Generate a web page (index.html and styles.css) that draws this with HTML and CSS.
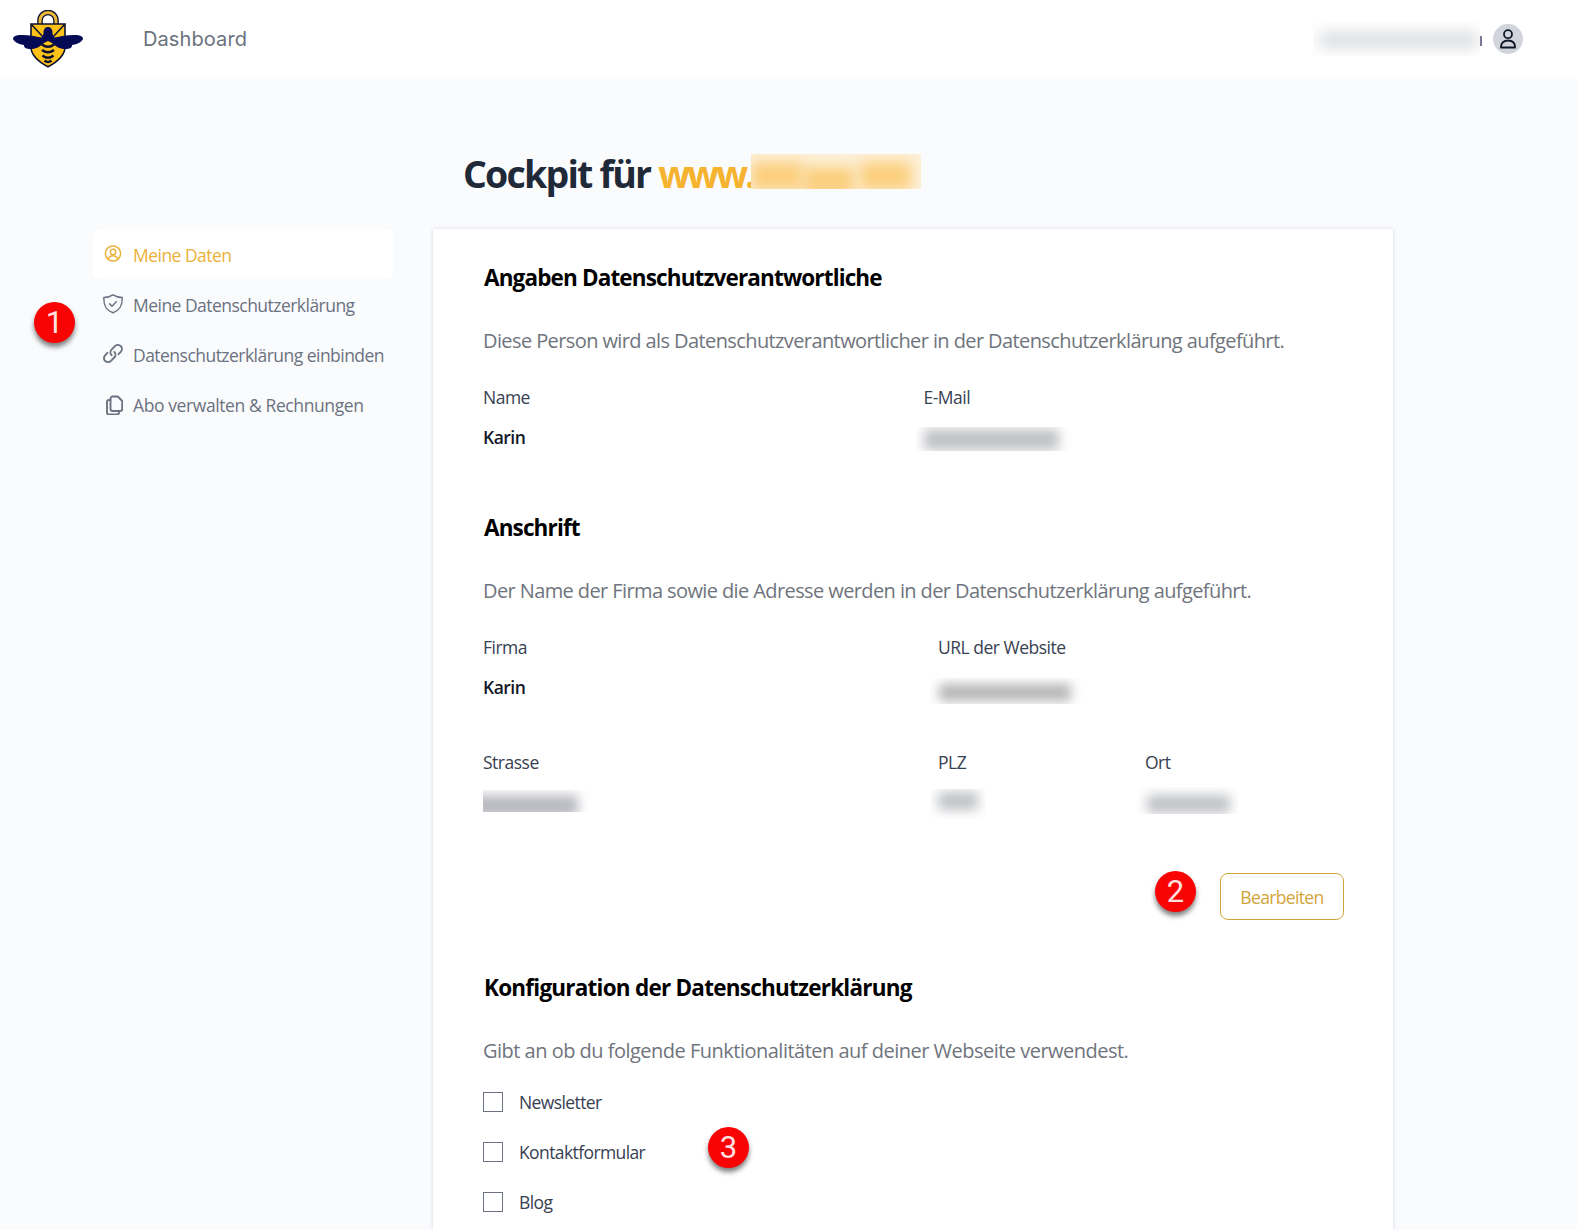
FILE: index.html
```html
<!DOCTYPE html>
<html lang="de">

<head>
    <title>Cockpit</title>
    <meta charset="utf-8" />
    <link rel="stylesheet" href="styles.css">
</head>

<body>

    <header class="topbar">
        <svg class="logo" viewBox="0 0 70 58" width="70" height="58">
            <path d="M27 15v-4.500a8 8 0 0 1 16 0V15" fill="none" stroke="#0b1030" stroke-width="5.600" />
            <path d="M27 15v-4.500a8 8 0 0 1 16 0V15" fill="none" stroke="#e9b93a" stroke-width="3" />
            <path d="M18 14h34v23c0 9-8 15-17 19.800C26 52 18 46 18 37z" fill="#fdc118" stroke="#0b1030" stroke-width="1.600" />
            <path d="M18.500 14.500L30 27M51.500 14.500L40 27" stroke="#0b1030" stroke-width="1.500" />
            <path d="M35 17c-3 0-4.500 2.500-4.500 5.500 0 2-.5 3.500-2 5C22 26 14 24.500 6 25c-5 .5-7.500 3-5 5.500 2 2.500 6 4.200 10 4.500-.5 3 3.500 4.500 8 4 5.500-.5 8.500-3 12-6l4-2 4 2c3.500 3 6.500 5.500 12 6 4.500.5 8.500-1 8-4 4-.3 8-2 10-4.500 2.500-2.500 0-5-5-5.500-8-.5-16 1-22.500 2.500-1.500-1.500-2-3-2-5 0-3-1.500-5.500-4.500-5.500z" fill="#050a55" />
            <path d="M29 34.500q6 4.500 12 0M29 40q6 4.500 12 0M29.500 45.500q5.500 4.500 11 0M31.500 50.500q3.500 3 7 0" fill="none" stroke="#0b1030" stroke-width="2.400" />
        </svg>
        <a class="topbar-link" href="#">Dashboard</a>
        <div class="account">
            <span class="redacted redacted-account"><i></i></span>
            <span class="account-edge"></span>
            <span class="avatar">
                <svg viewBox="0 0 24 24" width="24" height="24">
                    <circle cx="12" cy="7.200" r="4" />
                    <path d="M4.900 20.500c0-4.700 3-7 7.100-7s7.100 2.300 7.100 7z" />
                </svg>
            </span>
        </div>
    </header>

    <h1>Cockpit für <span class="domain">www.</span><span class="redacted redacted-domain"><i></i><i></i><i></i></span></h1>

    <div class="layout">
        <nav class="sidebar">
            <a class="nav-item active" href="#">
                <svg viewBox="0 0 20 20" width="20" height="20">
                    <circle cx="10" cy="9.500" r="7.600" />
                    <circle cx="10" cy="8" r="2.700" />
                    <path d="M5.200 15c.7-2.300 2.500-3.300 4.800-3.300s4.100 1 4.800 3.300" />
                </svg>
                <span>Meine Daten</span>
            </a>
            <a class="nav-item" href="#">
                <svg viewBox="0 0 20 20" width="20" height="20">
                    <path d="M10 .8c2.600 1.700 5.500 2.600 9.200 2.700C19.400 11 17.600 16 10 18.700 2.400 16 .6 11 .8 3.500 4.500 3.400 7.400 2.500 10 .8z" />
                    <path d="M6.700 9.900l2.300 2.300 4.300-4.500" />
                </svg>
                <span>Meine Datenschutzerklärung</span>
            </a>
            <a class="nav-item" href="#">
                <svg class="bold" viewBox="0 0 20 20" width="20" height="20">
                    <path d="M8.600 11.200a4 4 0 0 1 0-5.600l3.300-3.400a4 4 0 0 1 5.900 5.600l-2.300 2.400" />
                    <path d="M11.300 7.900a4 4 0 0 1 0 5.600L8 16.900a4 4 0 0 1-5.900-5.600l2.300-2.400" />
                </svg>
                <span>Datenschutzerklärung einbinden</span>
            </a>
            <a class="nav-item last" href="#">
                <svg class="bold" viewBox="0 0 20 20" width="20" height="20">
                    <path d="M9.500 1.500h5.300L19.200 6v8a2 2 0 0 1-2 2H9.500a2 2 0 0 1-2-2V3.500a2 2 0 0 1 2-2z" />
                    <path d="M7.500 5H6a2 2 0 0 0-2 2v10.500a2 2 0 0 0 2 2h8a2 2 0 0 0 2-2V16" />
                </svg>
                <span>Abo verwalten &amp; Rechnungen</span>
            </a>
        </nav>

        <main class="card">
            <section>
                <h2>Angaben Datenschutzverantwortliche</h2>
                <p class="intro">Diese Person wird als Datenschutzverantwortlicher in der Datenschutzerklärung aufgeführt.</p>
                <div class="fields two">
                    <div class="field">
                        <label>Name</label>
                        <strong>Karin</strong>
                    </div>
                    <div class="field">
                        <label>E-Mail</label>
                        <span class="redacted redacted-mail"><i></i></span>
                    </div>
                </div>
            </section>

            <section>
                <h2>Anschrift</h2>
                <p class="intro">Der Name der Firma sowie die Adresse werden in der Datenschutzerklärung aufgeführt.</p>
                <div class="fields three">
                    <div class="field">
                        <label>Firma</label>
                        <strong>Karin</strong>
                    </div>
                    <div class="field wide">
                        <label>URL der Website</label>
                        <span class="redacted redacted-url"><i></i></span>
                    </div>
                    <div class="field">
                        <label>Strasse</label>
                        <span class="redacted redacted-street"><i></i></span>
                    </div>
                    <div class="field">
                        <label>PLZ</label>
                        <span class="redacted redacted-plz"><i></i></span>
                    </div>
                    <div class="field">
                        <label>Ort</label>
                        <span class="redacted redacted-ort"><i></i></span>
                    </div>
                </div>
                <div class="actions">
                    <button class="btn" type="button">Bearbeiten</button>
                </div>
            </section>

            <section>
                <h2 class="loose">Konfiguration der Datenschutzerklärung</h2>
                <p class="intro loose">Gibt an ob du folgende Funktionalitäten auf deiner Webseite verwendest.</p>
                <div class="options">
                    <label class="option"><input type="checkbox" /><span>Newsletter</span></label>
                    <label class="option"><input type="checkbox" /><span>Kontaktformular</span></label>
                    <label class="option"><input type="checkbox" /><span>Blog</span></label>
                </div>
            </section>
        </main>
    </div>

    <!-- Markierungen -->
    <span class="marker marker-1">1</span>
    <span class="marker marker-2">2</span>
    <span class="marker marker-3">3</span>

</body>

</html>
```
FILE: styles.css
```css
* {
    box-sizing: border-box;
}

body {
    margin: 0;
    height: 1230px;
    overflow: hidden;
    position: relative;
    background-color: #fafbfd;
    font-family: "Open Sans", "Noto Sans", sans-serif;
    color: #1f2937;
}

a {
    text-decoration: none;
}

/* Kopfzeile */

.topbar {
    display: flex;
    align-items: center;
    height: 79px;
    padding: 0 54px 2px 13px;
    background-color: #fff;
}

.topbar-link {
    margin-left: 60px;
    font-family: Inter, sans-serif;
    font-size: 20px;
    letter-spacing: 0.1px;
    color: #6b7280;
}

.account {
    display: flex;
    align-items: center;
    margin-left: auto;
}

.account-edge {
    width: 2px;
    height: 10px;
    margin: 4px 11px 0 0;
    background-color: #777994;
}

.avatar {
    display: flex;
    align-items: center;
    justify-content: center;
    width: 30px;
    height: 30px;
    border-radius: 50%;
    background-color: #d1d5db;
}

.avatar svg {
    fill: none;
    stroke: #111827;
    stroke-width: 1.800;
    stroke-linejoin: round;
}

/* Titel */

h1 {
    display: flex;
    height: 50px;
    margin: 70px 0 30px 463px;
    font-size: 37.5px;
    line-height: 50px;
    font-weight: 700;
    letter-spacing: -1.800px;
    white-space: pre;
}

.domain {
    width: 93px;
    letter-spacing: -3.200px;
    color: #f5b32f;
}

/* Aufbau */

.layout {
    display: grid;
    grid-template-columns: 300px 960px;
    column-gap: 40px;
    margin-left: 93px;
}

.nav-item {
    display: flex;
    align-items: center;
    gap: 10px;
    height: 50px;
    padding: 0 10px;
    border-radius: 6px;
    font-size: 17.5px;
    letter-spacing: -0.530px;
    white-space: nowrap;
    color: #6b7280;
}

.nav-item.last {
    letter-spacing: -0.400px;
}

.nav-item span {
    padding-top: 2px;
}

.nav-item.active {
    background-color: #fff;
    color: #eab13a;
}

.nav-item svg {
    flex: none;
    fill: none;
    stroke: currentColor;
    stroke-width: 1.500;
    stroke-linecap: round;
    stroke-linejoin: round;
}

.nav-item svg.bold {
    stroke-width: 1.900;
}

.nav-item.last svg {
    margin-top: 2px;
}

.card {
    height: 1001px;
    padding: 31px 49px 0 50px;
    background-color: #fff;
    box-shadow: 0 0 4px rgba(30, 50, 90, 0.16);
}

section + section {
    margin-top: 60px;
}

section:last-child {
    margin-top: 50px;
}

h2 {
    margin: 0 0 31px;
    padding-left: 1px;
    font-size: 22.5px;
    line-height: 35px;
    font-weight: 700;
    letter-spacing: -0.860px;
    color: #000;
}

h2.loose {
    letter-spacing: -0.770px;
}

.intro {
    margin: 0 0 29px;
    font-size: 20px;
    line-height: 30px;
    letter-spacing: -0.600px;
    white-space: nowrap;
    color: #6f747d;
}

.intro.loose {
    letter-spacing: -0.510px;
}

.fields {
    display: grid;
    font-size: 17.5px;
    line-height: 25px;
}

.fields.two {
    grid-template-columns: 1fr 1fr;
    column-gap: 20px;
}

.fields.three {
    grid-template-columns: 455px 207px 1fr;
    row-gap: 50px;
}

.field {
    display: flex;
    flex-direction: column;
    gap: 15px;
    height: 65px;
    letter-spacing: -0.5px;
    color: #374151;
}

.field strong {
    font-weight: 600;
    color: #111827;
}

.field.wide {
    grid-column: span 2;
}

.actions {
    display: flex;
    justify-content: flex-end;
    margin-top: 58px;
}

.btn {
    width: 124px;
    height: 47px;
    padding: 0;
    border: 1px solid #d2a53a;
    border-radius: 8px;
    background-color: #fff;
    font-family: inherit;
    font-size: 17.5px;
    letter-spacing: -0.650px;
    color: #d2a53a;
}

.options {
    display: flex;
    flex-direction: column;
    gap: 25px;
    margin-top: -5px;
}

.option {
    display: flex;
    align-items: center;
    gap: 16px;
    height: 25px;
    font-size: 17.5px;
    line-height: 25px;
    letter-spacing: -0.600px;
    color: #374151;
}

.option input {
    appearance: none;
    width: 20px;
    height: 20px;
    margin: 0 0 2px;
    border: 1px solid #6b7280;
    background-color: #fff;
}

/* Unkenntlich gemachte Angaben */

.redacted {
    display: block;
    flex: none;
    overflow: hidden;
}

.redacted i {
    display: block;
    filter: blur(6px);
    background-color: #bfc1c5;
}

.redacted-account {
    width: 167px;
    height: 34px;
}

.redacted-account i {
    height: 18px;
    margin: 9px 2px 0 6px;
    background-color: #dfe1e4;
    filter: blur(7px);
}

.redacted-domain {
    display: flex;
    width: 170px;
    height: 35px;
    margin-top: 5px;
    background-color: #fdf1da;
}

.redacted-domain i {
    flex: 1;
    height: 28px;
    margin: 13px 0 0;
    background-color: #fbce7c;
    filter: blur(7px);
}

.redacted-domain i:first-child {
    margin-top: 8px;
}

.redacted-domain i:last-child {
    margin: 8px 10px 0 6px;
}

.redacted-mail {
    width: 157px;
    height: 24px;
    margin: 2px 0 0 -8px;
}

.redacted-mail i {
    height: 21px;
    margin: 2px 14px 0 8px;
}

.redacted-url {
    width: 155px;
    height: 26px;
    margin: 3px 0 0 -8px;
}

.redacted-url i {
    height: 17px;
    margin: 6px 14px 0 9px;
    background-color: #b4b4b6;
}

.redacted-street {
    width: 107px;
    height: 22px;
}

.redacted-street i {
    height: 22px;
    margin: 5px 12px 0 -12px;
    background-color: #b9bac0;
}

.redacted-plz {
    width: 55px;
    height: 30px;
    margin: -1px 0 0 -7px;
}

.redacted-plz i {
    height: 18px;
    margin: 3px 8px 0 7px;
}

.redacted-ort {
    width: 101px;
    height: 27px;
    margin: -3px 0 0 -8px;
}

.redacted-ort i {
    height: 18px;
    margin: 8px 8px 0 10px;
}

/* Markierungen */

.marker {
    position: absolute;
    width: 41px;
    height: 41px;
    border-radius: 50%;
    background-color: #f90404;
    box-shadow: 0 4px 5px rgba(0, 0, 0, 0.5);
    font-family: Roboto, sans-serif;
    font-size: 31px;
    line-height: 41px;
    text-align: center;
    color: #ffe0e0;
}

.marker-1 {
    left: 34px;
    top: 302px;
}

.marker-2 {
    left: 1155px;
    top: 871px;
}

.marker-3 {
    left: 708px;
    top: 1127px;
}
```
